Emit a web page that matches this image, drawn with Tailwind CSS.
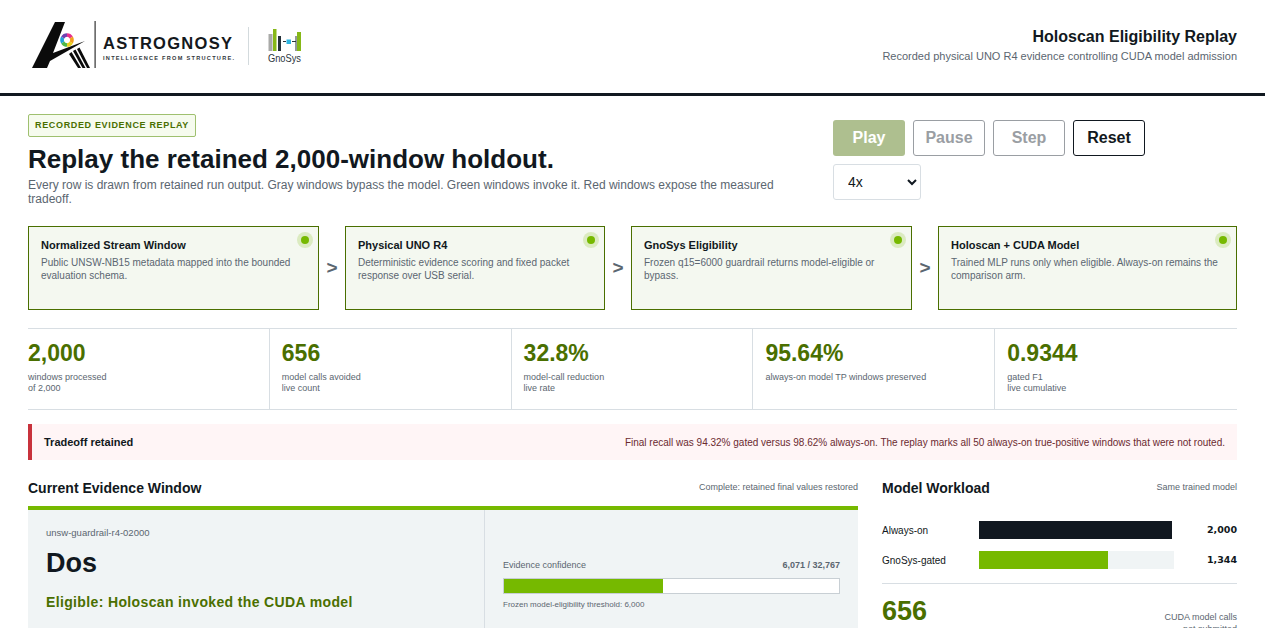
<!DOCTYPE html>
<html lang="en">
<head>
  <meta charset="UTF-8" />
  <meta name="viewport" content="width=device-width, initial-scale=1.0" />
  <title>Holoscan Eligibility Replay</title>
  <script src="https://cdn.jsdelivr.net/npm/@tailwindcss/browser@4"></script>
</head>
<body class="bg-white text-[#111820] font-['Liberation_Sans',Arial,sans-serif]">
  <div class="h-[628px] overflow-hidden">
    <!-- header -->
    <header class="h-[96px] border-b-[3px] border-[#111820] pl-[28px] pr-[28px] flex items-center justify-between">
      <svg width="280" height="93" viewBox="28 0 280 93" class="shrink-0" aria-label="Astrognosy and GnoSys logos">
        <polygon points="55,22 65,22 53,53 85,41 50,61 47,68 32,68" fill="#0b0b0b" />
        <polygon points="69,54 71.5,52 81,68 78,68" fill="#0b0b0b" />
        <polygon points="73,51 75.5,49.5 85.5,68 82.5,68" fill="#0b0b0b" />
        <polygon points="77,49 79.5,47.5 90,68 87,68" fill="#0b0b0b" />
        <g fill="none" stroke-width="3.6">
          <path d="M67 35 A5 5 0 0 1 71.3 37.5" stroke="#e8308a" />
          <path d="M71.3 37.5 A5 5 0 0 1 71.3 42.5" stroke="#f0a020" />
          <path d="M71.3 42.5 A5 5 0 0 1 67 45" stroke="#e9d020" />
          <path d="M67 45 A5 5 0 0 1 62.7 42.5" stroke="#50b848" />
          <path d="M62.7 42.5 A5 5 0 0 1 62.7 37.5" stroke="#20a0d8" />
          <path d="M62.7 37.5 A5 5 0 0 1 67 35" stroke="#7040b0" />
        </g>
        <rect x="94.5" y="21" width="1.2" height="47" fill="#333" />
        <text x="103" y="49" font-size="16.5" font-weight="700" textLength="129" lengthAdjust="spacing" fill="#14181c">ASTROGNOSY</text>
        <text x="103" y="60" font-size="5.6" font-weight="700" textLength="131" lengthAdjust="spacing" fill="#33383d">INTELLIGENCE FROM STRUCTURE.</text>
        <rect x="248" y="27" width="1" height="38" fill="#d3dadd" />
        <rect x="268.5" y="34" width="4" height="17" fill="#a9aaa8" />
        <rect x="273" y="29" width="3.5" height="22" fill="#86b817" />
        <rect x="278" y="36" width="3" height="15" fill="#26323a" />
        <rect x="283" y="41" width="3" height="1" fill="#26323a" />
        <rect x="286.5" y="39.5" width="4.5" height="4.5" fill="#2cb5e2" />
        <rect x="292" y="41" width="4" height="1" fill="#26323a" />
        <rect x="295.5" y="36" width="1" height="15" fill="#26323a" />
        <rect x="297" y="32" width="4" height="19" fill="#86b817" />
        <text x="268" y="62" font-size="10.5" textLength="33" lengthAdjust="spacingAndGlyphs" fill="#2a343b">GnoSys</text>
      </svg>
      <div class="text-right -mt-[4px]">
        <div class="text-[16px] leading-[20px] font-bold">Holoscan Eligibility Replay</div>
        <div class="text-[11px] leading-[14px] mt-[2px] text-[#5b6670]">Recorded physical UNO R4 evidence controlling CUDA model admission</div>
      </div>
    </header>

    <main class="px-[28px]">
      <!-- intro + controls -->
      <section class="flex justify-between pt-[18px] h-[130px]">
        <div class="w-[760px]">
          <span class="block w-fit h-[23px] leading-[21px] px-[6px] border border-[#9fc06f] rounded-[2px] bg-[#f6fbee] text-[9px] font-bold tracking-[0.66px] text-[#4a6f00]">RECORDED EVIDENCE REPLAY</span>
          <h1 class="text-[26px] leading-[30px] font-bold mt-[7px]">Replay the retained 2,000-window holdout.</h1>
          <p class="text-[12px] leading-[14px] mt-[4px] text-[#5b6670]">Every row is drawn from retained run output. Gray windows bypass the model. Green windows invoke it. Red windows expose the measured tradeoff.</p>
        </div>
        <div class="w-[404px] pt-[6px]">
          <div class="flex gap-[8px]">
            <button class="w-[72px] h-[36px] rounded-[3px] bg-[#aebf8f] text-white text-[16px] font-bold">Play</button>
            <button class="w-[72px] h-[36px] rounded-[3px] border border-[#9a9ea3] text-[#9a9ea3] text-[16px] font-bold">Pause</button>
            <button class="w-[72px] h-[36px] rounded-[3px] border border-[#9a9ea3] text-[#9a9ea3] text-[16px] font-bold">Step</button>
            <button class="w-[72px] h-[36px] rounded-[3px] border border-[#111820] text-[#111820] text-[16px] font-bold">Reset</button>
          </div>
          <select class="mt-[8px] block w-[88px] h-[36px] pl-[10px] rounded-[3px] border border-[#d8dee3] bg-white text-[14px]">
            <option>4x</option>
          </select>
        </div>
      </section>

      <!-- pipeline -->
      <section class="flex items-stretch h-[84px]">
        <div class="relative w-[291px] border border-[#4a6f00] bg-[#f4f8f0] pl-[12px] pr-[12px] pt-[11px]">
          <span class="absolute top-[5px] right-[5px] w-[16px] h-[16px] rounded-full bg-[#76b900]/20 flex items-center justify-center"><span class="w-[8px] h-[8px] rounded-full bg-[#76b900]"></span></span>
          <h3 class="text-[11px] leading-[14px] font-bold">Normalized Stream Window</h3>
          <p class="text-[10px] leading-[13px] mt-[4px] text-[#5b6670]">Public UNSW-NB15 metadata mapped into the bounded evaluation schema.</p>
        </div>
        <div class="w-[26px] flex items-center justify-center text-[19px] font-bold text-[#5b6670]">&gt;</div>
        <div class="relative w-[260px] border border-[#4a6f00] bg-[#f4f8f0] pl-[12px] pr-[12px] pt-[11px]">
          <span class="absolute top-[5px] right-[5px] w-[16px] h-[16px] rounded-full bg-[#76b900]/20 flex items-center justify-center"><span class="w-[8px] h-[8px] rounded-full bg-[#76b900]"></span></span>
          <h3 class="text-[11px] leading-[14px] font-bold">Physical UNO R4</h3>
          <p class="text-[10px] leading-[13px] mt-[4px] text-[#5b6670]">Deterministic evidence scoring and fixed packet response over USB serial.</p>
        </div>
        <div class="w-[26px] flex items-center justify-center text-[19px] font-bold text-[#5b6670]">&gt;</div>
        <div class="relative w-[281px] border border-[#4a6f00] bg-[#f4f8f0] pl-[12px] pr-[12px] pt-[11px]">
          <span class="absolute top-[5px] right-[5px] w-[16px] h-[16px] rounded-full bg-[#76b900]/20 flex items-center justify-center"><span class="w-[8px] h-[8px] rounded-full bg-[#76b900]"></span></span>
          <h3 class="text-[11px] leading-[14px] font-bold">GnoSys Eligibility</h3>
          <p class="text-[10px] leading-[13px] mt-[4px] text-[#5b6670]">Frozen q15=6000 guardrail returns model-eligible or bypass.</p>
        </div>
        <div class="w-[26px] flex items-center justify-center text-[19px] font-bold text-[#5b6670]">&gt;</div>
        <div class="relative w-[299px] border border-[#4a6f00] bg-[#f4f8f0] pl-[12px] pr-[12px] pt-[11px]">
          <span class="absolute top-[5px] right-[5px] w-[16px] h-[16px] rounded-full bg-[#76b900]/20 flex items-center justify-center"><span class="w-[8px] h-[8px] rounded-full bg-[#76b900]"></span></span>
          <h3 class="text-[11px] leading-[14px] font-bold">Holoscan + CUDA Model</h3>
          <p class="text-[10px] leading-[13px] mt-[4px] text-[#5b6670]">Trained MLP runs only when eligible. Always-on remains the comparison arm.</p>
        </div>
      </section>

      <!-- metrics -->
      <section class="mt-[18px] h-[82px] grid grid-cols-5 border-y border-[#d8dee3]">
        <div class="border-r border-[#d8dee3] pt-[11px]">
          <div class="text-[23px] leading-[26px] font-bold text-[#4a6f00]">2,000</div>
          <div class="text-[9px] leading-[11px] mt-[6px] text-[#5b6670]">windows processed<br />of 2,000</div>
        </div>
        <div class="border-r border-[#d8dee3] pt-[11px] pl-[12px]">
          <div class="text-[23px] leading-[26px] font-bold text-[#4a6f00]">656</div>
          <div class="text-[9px] leading-[11px] mt-[6px] text-[#5b6670]">model calls avoided<br />live count</div>
        </div>
        <div class="border-r border-[#d8dee3] pt-[11px] pl-[12px]">
          <div class="text-[23px] leading-[26px] font-bold text-[#4a6f00]">32.8%</div>
          <div class="text-[9px] leading-[11px] mt-[6px] text-[#5b6670]">model-call reduction<br />live rate</div>
        </div>
        <div class="border-r border-[#d8dee3] pt-[11px] pl-[12px]">
          <div class="text-[23px] leading-[26px] font-bold text-[#4a6f00]">95.64%</div>
          <div class="text-[9px] leading-[11px] mt-[6px] text-[#5b6670]">always-on model TP windows preserved</div>
        </div>
        <div class="pt-[11px] pl-[12px]">
          <div class="text-[23px] leading-[26px] font-bold text-[#4a6f00]">0.9344</div>
          <div class="text-[9px] leading-[11px] mt-[6px] text-[#5b6670]">gated F1<br />live cumulative</div>
        </div>
      </section>

      <!-- tradeoff -->
      <section class="mt-[14px] h-[36px] flex items-center justify-between border-l-[4px] border-[#c8323c] bg-[#fff5f6] pl-[12px] pr-[12px]">
        <strong class="text-[11px] font-bold">Tradeoff retained</strong>
        <span class="text-[10px] text-[#6b2a30]">Final recall was 94.32% gated versus 98.62% always-on. The replay marks all 50 always-on true-positive windows that were not routed.</span>
      </section>

      <!-- lower panels -->
      <section class="mt-[18px] flex gap-[24px]">
        <div class="w-[830px] shrink-0">
          <div class="flex items-center justify-between h-[20px]">
            <h2 class="text-[14px] font-bold">Current Evidence Window</h2>
            <span class="text-[9px] text-[#5b6670]">Complete: retained final values restored</span>
          </div>
          <div class="mt-[8px] border-t-[4px] border-[#76b900] bg-[#f0f4f5] flex h-[200px]">
            <div class="w-[457px] border-r border-[#d8dee3] pl-[18px] pt-[17px]">
              <div class="text-[9.5px] leading-[12px] text-[#5b6670]">unsw-guardrail-r4-02000</div>
              <div class="text-[27px] leading-[30px] font-bold mt-[9px]">Dos</div>
              <div class="text-[14px] leading-[16px] font-bold tracking-[0.36px] text-[#4a6f00] mt-[16px]">Eligible: Holoscan invoked the CUDA model</div>
            </div>
            <div class="flex-1 pl-[18px] pr-[18px] pt-[49px]">
              <div class="flex justify-between text-[9px] leading-[12px] text-[#5b6670]">
                <span>Evidence confidence</span>
                <span class="font-bold">6,071 / 32,767</span>
              </div>
              <div class="h-[16px] mt-[7px] border border-[#c8cfd4] bg-white">
                <div class="h-full w-[47.5%] bg-[#76b900]"></div>
              </div>
              <div class="text-[8px] leading-[11px] mt-[5px] text-[#5b6670]">Frozen model-eligibility threshold: 6,000</div>
            </div>
          </div>
        </div>

        <div class="flex-1">
          <div class="flex items-center justify-between h-[20px]">
            <h2 class="text-[14px] font-bold">Model Workload</h2>
            <span class="text-[9px] text-[#5b6670]">Same trained model</span>
          </div>
          <div class="flex items-center h-[18px] mt-[23px]">
            <span class="w-[97px] text-[10px]">Always-on</span>
            <div class="w-[195px] h-[18px]"><div class="w-[193px] h-full bg-[#111820]"></div></div>
            <span class="flex-1 text-right text-[9.5px] font-bold font-['DejaVu_Sans',sans-serif]">2,000</span>
          </div>
          <div class="flex items-center h-[18px] mt-[12px]">
            <span class="w-[97px] text-[10px]">GnoSys-gated</span>
            <div class="w-[195px] h-[18px] bg-[#f0f4f5]"><div class="w-[129px] h-full bg-[#76b900]"></div></div>
            <span class="flex-1 text-right text-[9.5px] font-bold font-['DejaVu_Sans',sans-serif]">1,344</span>
          </div>
          <div class="mt-[14px] border-t border-[#d8dee3] pt-[11px] flex justify-between items-start">
            <span class="text-[27px] leading-[32px] font-bold text-[#4a6f00]">656</span>
            <span class="text-right text-[9px] leading-[12px] mt-[16px] text-[#5b6670]">CUDA model calls<br />not submitted</span>
          </div>
        </div>
      </section>
    </main>
  </div>
</body>
</html>
